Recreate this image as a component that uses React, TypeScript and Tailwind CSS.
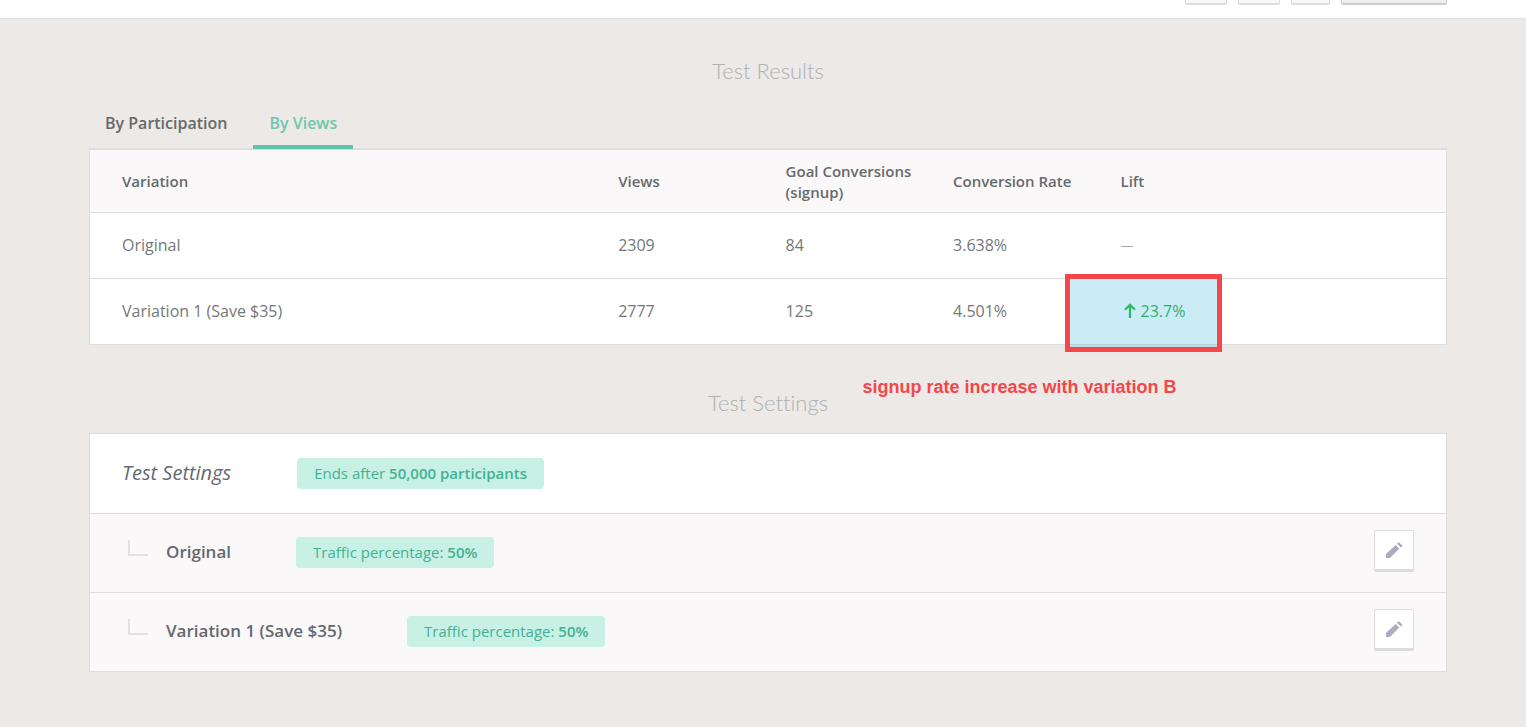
import React from "react";

type Result = {
  name: string;
  views: number;
  conversions: number;
  rate: string;
  lift?: string;
};

const results: Result[] = [
  { name: "Original", views: 2309, conversions: 84, rate: "3.638%" },
  { name: "Variation 1 (Save $35)", views: 2777, conversions: 125, rate: "4.501%", lift: "23.7%" },
];

const variations = [
  { name: "Original", traffic: "50%" },
  { name: "Variation 1 (Save $35)", traffic: "50%" },
];

function SectionTitle({ children }: { children: React.ReactNode }) {
  return (
    <h2 className="text-center font-['Lato',sans-serif] text-[22px] leading-8 font-light text-[#aeb1b1] [font-variant-ligatures:none]">
      {children}
    </h2>
  );
}

function Pill({ children }: { children: React.ReactNode }) {
  return (
    <span className="rounded bg-[#c8f1e6] px-[17px] text-[15px] leading-[31px] text-[#45b091]">{children}</span>
  );
}

function ArrowUp() {
  return (
    <svg className="h-4 w-3" viewBox="0 0 12 16" fill="none" stroke="#2cb967" strokeWidth="2.2" aria-hidden="true">
      <path d="M6 15V2M1 6.8 6 1.8l5 5" />
    </svg>
  );
}

function Pencil() {
  return (
    <svg className="h-[18px] w-[18px]" viewBox="0 0 18 18" fill="#aeabc1" aria-hidden="true">
      <path d="M1 17v-3.6q0-.5.4-.9L10.7 4l3.6 3.5L5.4 16.6q-.4.4-.9.4H1Z" />
      <path d="m11.9 2.7 1.1-1q.7-.6 1.4 0l2.7 2.5q.6.6 0 1.2l-1.1 1.1-4.1-3.8Z" />
    </svg>
  );
}

function Highlight() {
  return (
    <div className="pointer-events-none absolute -top-[5px] -bottom-[8px] -left-14 w-[157px] border-[5px] border-[#f5464a] bg-[#31b7e0]/26">
      <p className="absolute top-24 right-10 font-['Liberation_Sans',sans-serif] text-lg leading-6 font-bold whitespace-nowrap text-[#f5464a]">
        signup rate increase with variation B
      </p>
    </div>
  );
}

function ResultsTable() {
  return (
    <div className="border border-t-2 border-[#dddddd] bg-white">
      <table className="w-full table-fixed border-collapse text-left text-base leading-[21px]">
        <colgroup>
          <col className="w-[38.95%]" />
          <col className="w-[12.35%]" />
          <col className="w-[12.35%]" />
          <col className="w-[12.35%]" />
          <col />
        </colgroup>
        <thead className="bg-[#faf8f9] text-[15px] text-[#666a6b]">
          <tr className="h-[62px]">
            <th className="pt-0.5 pl-8 font-semibold">Variation</th>
            <th className="pt-0.5 font-semibold">Views</th>
            <th className="pt-0.5 pr-4 font-semibold">Goal Conversions (signup)</th>
            <th className="pt-0.5 font-semibold">Conversion Rate</th>
            <th className="pt-0.5 font-semibold">Lift</th>
          </tr>
        </thead>
        <tbody className="text-[#74787a]">
          {results.map((r) => (
            <tr key={r.name} className="h-[66px] border-t border-[#dddddd]">
              <td className="pl-8">{r.name}</td>
              <td>{r.views}</td>
              <td>{r.conversions}</td>
              <td>{r.rate}</td>
              <td className="relative">
                {r.lift ? (
                  <>
                    <Highlight />
                    <span className="relative ml-[3px] flex items-center gap-[5px] text-[#33ae6a]">
                      <ArrowUp />
                      {r.lift}
                    </span>
                  </>
                ) : (
                  <span className="text-[13px] text-[#aaaaaa]">—</span>
                )}
              </td>
            </tr>
          ))}
        </tbody>
      </table>
    </div>
  );
}

export default function App() {
  return (
    <div className="min-h-screen bg-[#ece9e6] font-['Open_Sans',sans-serif]">
      <header className="h-[19px] border-b border-[#dddddd] bg-white pr-[79px]">
        <div className="flex justify-end gap-[11px]">
          <button aria-label="Previous" className="h-[5px] w-[42px] rounded-b-xs border-x border-b-2 border-[#dddddd] bg-[#f8f8f8]" />
          <button aria-label="Next" className="h-[5px] w-[42px] rounded-b-xs border-x border-b-2 border-[#dddddd] bg-[#f8f8f8]" />
          <button aria-label="More" className="h-[5px] w-[39px] rounded-b-xs border-x border-b-2 border-[#dddddd] bg-[#f8f8f8]" />
          <button aria-label="Actions" className="h-[5px] w-[106px] rounded-b-xs border-x border-b-2 border-[#cccccc] bg-[#eeeeee]" />
        </div>
      </header>

      <main className="pr-[79px] pb-14 pl-[89px]">
        <section className="pt-9">
          <SectionTitle>Test Results</SectionTitle>
          <div role="tablist" className="mt-3 -mb-px flex gap-2.5 text-base leading-[22px] font-semibold">
            <button role="tab" aria-selected="false" className="border-b-4 border-transparent px-4 pt-[13px] pb-[11px] text-[#666a6b]">
              By Participation
            </button>
            <button role="tab" aria-selected="true" className="relative border-b-4 border-[#5cc4a8] px-4 pt-[13px] pb-[11px] text-[#6ec6ad]">
              By Views
            </button>
          </div>
          <ResultsTable />
        </section>

        <section className="mt-[42px]">
          <SectionTitle>Test Settings</SectionTitle>
          <div className="mt-[14px] border border-[#dddddd] bg-white">
            <div className="flex h-[79px] items-center gap-[66px] pl-8">
              <h3 className="pb-0.5 text-xl text-[#666a70] italic">Test Settings</h3>
              <Pill>
                Ends after <strong className="font-semibold">50,000 participants</strong>
              </Pill>
            </div>
            {variations.map((v) => (
              <div key={v.name} className="flex h-[79px] items-center border-t border-[#dddddd] bg-[#faf8f9] pr-8 pb-px pl-[38px]">
                <span className="mr-[18px] mb-2.5 h-4 w-5 border-b-2 border-l-2 border-[#e2e0e2]" />
                <h3 className="mr-[65px] pb-0.5 text-[17px] font-semibold text-[#64686e]">{v.name}</h3>
                <Pill>
                  Traffic percentage: <strong className="font-semibold">{v.traffic}</strong>
                </Pill>
                <button
                  aria-label={`Edit ${v.name}`}
                  className="mb-[3px] ml-auto flex h-[42px] w-10 items-center justify-center rounded-xs border border-b-3 border-[#dcdcdc] bg-white"
                >
                  <Pencil />
                </button>
              </div>
            ))}
          </div>
        </section>
      </main>
    </div>
  );
}
